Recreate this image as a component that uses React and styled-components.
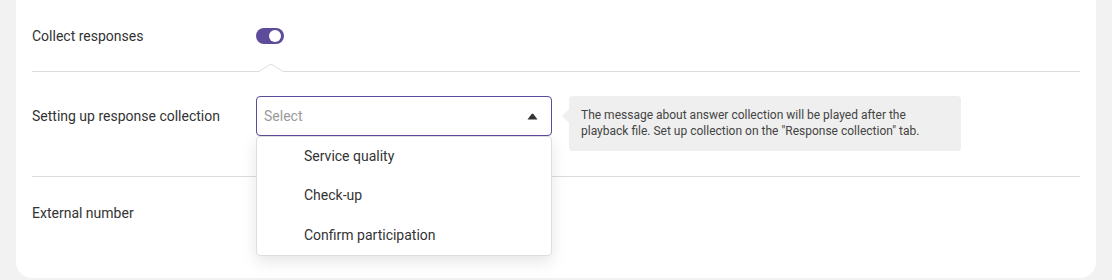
import React from "react";
import styled, { createGlobalStyle } from "styled-components";

const GlobalStyle = createGlobalStyle`
  html, body {
    margin: 0;
    padding: 0;
    background: #f1f2f1;
    font-family: Roboto, "Liberation Sans", sans-serif;
    color: #333;
  }
  * { box-sizing: border-box; }
`;

const Page = styled.div`
  padding: 0 16px;
  width: 1112px;
  height: 280px;
`;

const Card = styled.div`
  background: #fff;
  border-radius: 0 0 16px 16px;
  padding: 0 16px;
  height: 278px;
  position: relative;
  &::before {
    content: "";
    position: absolute;
    left: 0;
    right: 0;
    top: -16px;
    height: 32px;
    background: #fff;
    border-radius: 16px;
    z-index: 0;
  }
`;

const Row = styled.div`
  position: relative;
  display: flex;
  align-items: ${(p) => (p.$top ? "flex-start" : "center")};
  padding: ${(p) => p.$pt}px 0 ${(p) => p.$pb}px;
  border-bottom: ${(p) => (p.$last ? "none" : "1px solid #dcdcdc")};
  z-index: ${(p) => p.$z || 1};
`;

const Label = styled.div`
  width: 224px;
  flex-shrink: 0;
  font-size: 14px;
  line-height: 40px;
  color: #333;
`;

const Toggle = styled.div`
  width: 28px;
  height: 16px;
  border-radius: 8px;
  background: #5f4b9b;
  position: relative;
  &::after {
    content: "";
    position: absolute;
    right: 3px;
    top: 2px;
    width: 12px;
    height: 12px;
    border-radius: 50%;
    background: #fff;
  }
`;

const NotchSvg = styled.svg`
  position: absolute;
  left: 227px;
  bottom: -1px;
  display: block;
`;

const Notch = () => (
  <NotchSvg width="24" height="9" viewBox="0 0 24 9">
    <path d="M0 8.5 L12 1 L24 8.5 L24 9 L0 9 Z" fill="#fff" />
    <path d="M0 8.5 L12 1 L24 8.5" fill="none" stroke="#dcdcdc" strokeWidth="1" />
  </NotchSvg>
);

const SelectWrap = styled.div`
  position: relative;
  width: 296px;
  flex-shrink: 0;
`;

const SelectBox = styled.div`
  height: 40px;
  border: 1px solid #5f4b9b;
  border-radius: 4px;
  display: flex;
  align-items: center;
  justify-content: space-between;
  padding: 0 13px 0 7px;
  font-size: 14px;
  color: #9a9a9a;
`;

const Menu = styled.div`
  position: absolute;
  top: 40px;
  left: 0;
  right: 0;
  background: #fff;
  border: 1px solid #dedede;
  border-radius: 4px;
  box-shadow: 0 6px 16px rgba(0, 0, 0, 0.1);
  z-index: 5;
`;

const Item = styled.div`
  height: 40px;
  display: flex;
  align-items: center;
  padding-left: 47px;
  font-size: 14px;
  color: #333;
  &:first-child {
    height: 38px;
  }
`;

const Hint = styled.div`
  position: relative;
  margin-left: 17px;
  width: 392px;
  background: #eeefee;
  border-radius: 4px;
  padding: 11px 12px 12px 12px;
  font-size: 12px;
  line-height: 16px;
  color: #444;
  &::before {
    content: "";
    position: absolute;
    left: -7px;
    top: 13px;
    border-top: 7px solid transparent;
    border-bottom: 7px solid transparent;
    border-right: 7px solid #eeefee;
  }
`;

const Caret = () => (
  <svg width="11" height="7" viewBox="0 0 11 7">
    <path d="M0.5 6.5 L4.6 1 Q5.5 0 6.4 1 L10.5 6.5 Z" fill="#333" />
  </svg>
);

export default function App() {
  return (
    <>
      <GlobalStyle />
      <Page>
        <Card>
          <Row $pt={16} $pb={15} $z={2}>
            <Label>Collect responses</Label>
            <Toggle />
            <Notch />
          </Row>
          <Row $pt={24} $pb={25} $top $z={3}>
            <Label>Setting up response collection</Label>
            <SelectWrap>
              <SelectBox>
                Select
                <Caret />
              </SelectBox>
              <Menu>
                <Item>Service quality</Item>
                <Item>Check-up</Item>
                <Item>Confirm participation</Item>
              </Menu>
            </SelectWrap>
            <Hint>
              The message about answer collection will be played after the
              playback file. Set up collection on the "Response collection" tab.
            </Hint>
          </Row>
          <Row $pt={16} $pb={16} $last>
            <Label>External number</Label>
          </Row>
        </Card>
      </Page>
    </>
  );
}
